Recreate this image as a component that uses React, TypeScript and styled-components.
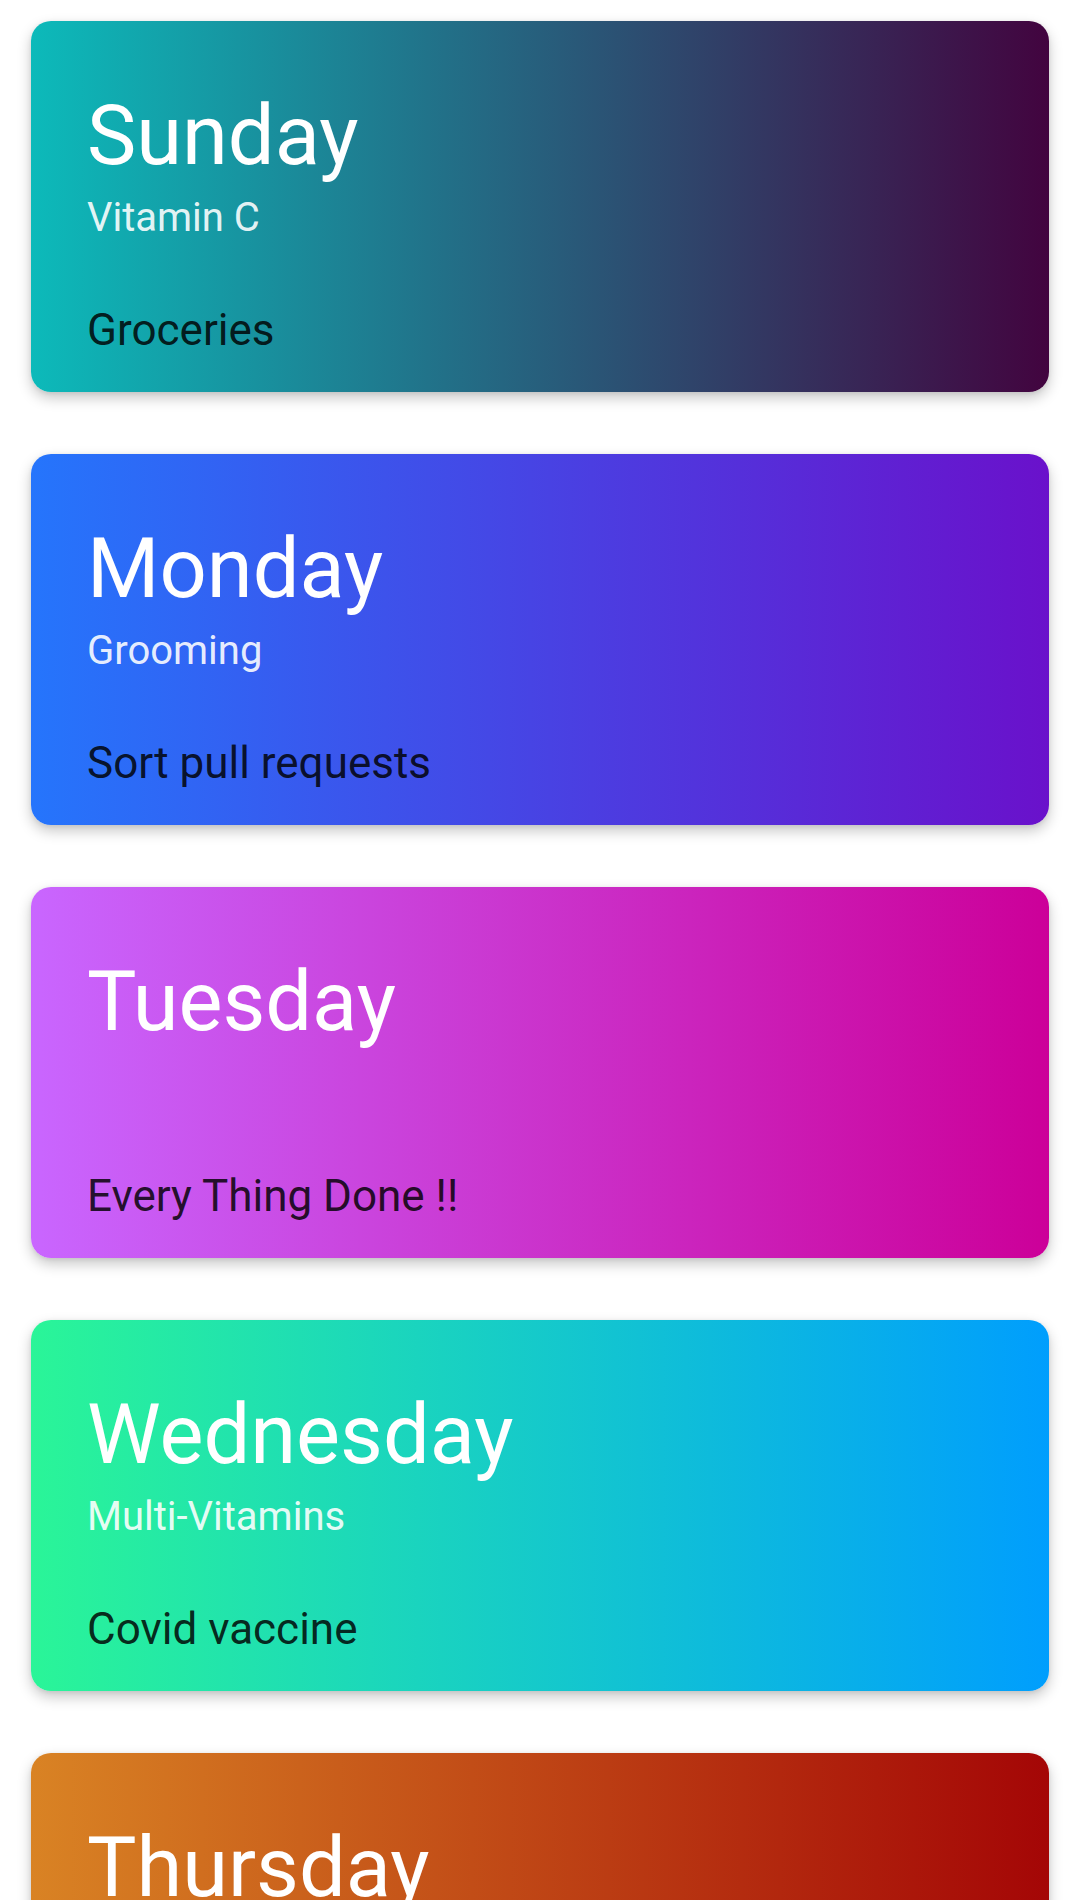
import React from "react";
import styled, { createGlobalStyle } from "styled-components";

const GlobalStyle = createGlobalStyle`
  html, body {
    margin: 0;
    padding: 0;
    background: #ffffff;
  }
  body {
    font-family: Roboto, "Noto Sans", "Liberation Sans", sans-serif;
    -webkit-font-smoothing: antialiased;
  }
`;

const List = styled.main`
  display: flex;
  flex-direction: column;
  gap: 62px;
  padding: 21px 31px 40px;
`;

const Card = styled.section<{ $from: string; $to: string }>`
  box-sizing: border-box;
  height: 371px;
  width: 1018px;
  padding: 65px 56px 0;
  border-radius: 20px;
  background: linear-gradient(to right, ${(p) => p.$from}, ${(p) => p.$to});
  box-shadow: 0 6px 14px rgba(0, 0, 0, 0.22), 0 1px 4px rgba(0, 0, 0, 0.08);
  display: flex;
  flex-direction: column;
`;

const Day = styled.h2`
  margin: 0;
  font-size: 83px;
  line-height: 100px;
  font-weight: 400;
  color: #ffffff;
`;

const Routine = styled.div`
  margin-top: 7px;
  height: 50px;
  font-size: 40px;
  line-height: 50px;
  color: rgba(255, 255, 255, 0.9);
`;

const Task = styled.div`
  margin-top: 61px;
  font-size: 44px;
  line-height: 52px;
  color: rgba(0, 0, 0, 0.84);
`;

type DayItem = {
  day: string;
  routine: string;
  task: string;
  from: string;
  to: string;
};

const days: DayItem[] = [
  { day: "Sunday", routine: "Vitamin C", task: "Groceries", from: "#0cbaba", to: "#42043f" },
  { day: "Monday", routine: "Grooming", task: "Sort pull requests", from: "#2575fc", to: "#6a11cb" },
  { day: "Tuesday", routine: "", task: "Every Thing Done !!", from: "#c966ff", to: "#cc0099" },
  { day: "Wednesday", routine: "Multi-Vitamins", task: "Covid vaccine", from: "#2af598", to: "#009efd" },
  { day: "Thursday", routine: "", task: "", from: "#d98324", to: "#a40606" },
];

export default function App() {
  return (
    <>
      <GlobalStyle />
      <List>
        {days.map((d) => (
          <Card key={d.day} $from={d.from} $to={d.to}>
            <Day>{d.day}</Day>
            <Routine>{d.routine}</Routine>
            <Task>{d.task}</Task>
          </Card>
        ))}
      </List>
    </>
  );
}
